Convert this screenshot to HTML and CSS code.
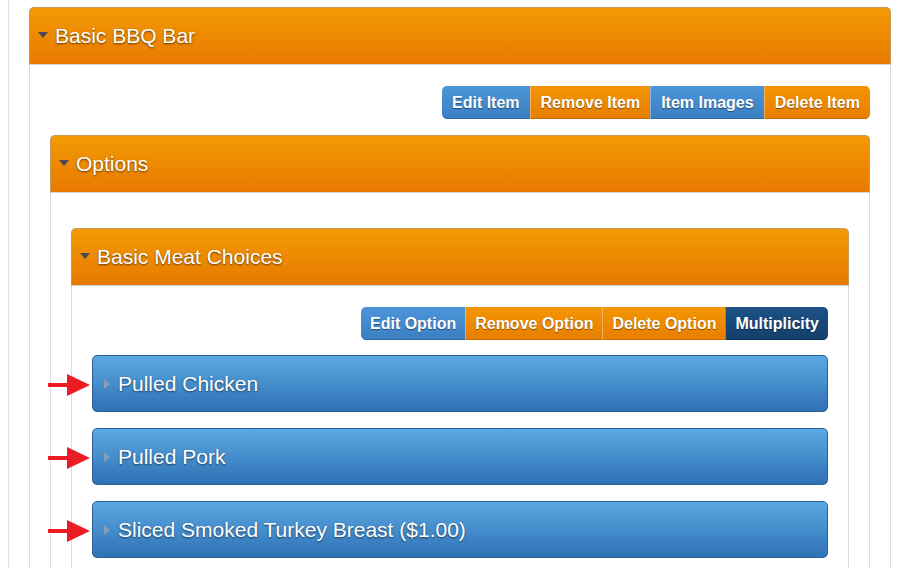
FILE: index.html
```html
<!DOCTYPE html>
<html lang="en">
<head>
  <meta charset="UTF-8">
  <meta name="viewport" content="width=device-width, initial-scale=1.0">
  <title>Basic BBQ Bar | Menu Editor</title>
  <link rel="stylesheet" href="styles.css">
</head>
<body>
  <div class="page">
    <div class="panel">
      <div class="panel-head"><span class="caret"></span>Basic BBQ Bar</div>
      <div class="panel-body">
        <div class="btn-row">
          <div class="btn-group">
            <a class="btn blue">Edit Item</a>
            <a class="btn orange">Remove Item</a>
            <a class="btn blue">Item Images</a>
            <a class="btn orange">Delete Item</a>
          </div>
        </div>

        <div class="panel">
          <div class="panel-head"><span class="caret"></span>Options</div>
          <div class="panel-body options-body">
            <div class="panel">
              <div class="panel-head"><span class="caret"></span>Basic Meat Choices</div>
              <div class="panel-body">
                <div class="btn-row">
                  <div class="btn-group compact">
                    <a class="btn blue">Edit Option</a>
                    <a class="btn orange">Remove Option</a>
                    <a class="btn orange">Delete Option</a>
                    <a class="btn navy">Multiplicity</a>
                  </div>
                </div>

                <div class="choices">
                  <div class="choice">
                    <svg class="pointer" width="44" height="24" viewBox="0 0 44 24"><rect x="0" y="10" width="21" height="4" fill="#ec1c24"/><polygon points="19,1 42,12 19,23" fill="#ec1c24"/></svg>
                    <span class="caret-right"></span>Pulled Chicken
                  </div>
                  <div class="choice">
                    <svg class="pointer" width="44" height="24" viewBox="0 0 44 24"><rect x="0" y="10" width="21" height="4" fill="#ec1c24"/><polygon points="19,1 42,12 19,23" fill="#ec1c24"/></svg>
                    <span class="caret-right"></span>Pulled Pork
                  </div>
                  <div class="choice">
                    <svg class="pointer" width="44" height="24" viewBox="0 0 44 24"><rect x="0" y="10" width="21" height="4" fill="#ec1c24"/><polygon points="19,1 42,12 19,23" fill="#ec1c24"/></svg>
                    <span class="caret-right"></span>Sliced Smoked Turkey Breast ($1.00)
                  </div>
                </div>
              </div>
            </div>
          </div>
        </div>
      </div>
    </div>
  </div>
</body>
</html>
```

FILE: styles.css
```css
body {
  margin: 0;
  background: #fff;
  font-family: "Liberation Sans", Arial, sans-serif;
}

.page {
  margin-left: 8px;
  border-left: 1px solid #e2e2e2;
  padding: 7px 9px 0 20px;
  min-height: 600px;
}

.panel {
  border: 1px solid #dcdcdc;
  border-top: 0;
  border-radius: 5px 5px 0 0;
  background: #fff;
}

.panel-head {
  height: 56px;
  margin: 0 -1px;
  border: 1px solid #c79a5a;
  border-bottom: 1px solid #d8d8d8;
  border-radius: 5px 5px 0 0;
  background: linear-gradient(#f39a05, #e87900);
  display: flex;
  align-items: center;
  padding-left: 8px;
  color: #fff;
  font-size: 21px;
  text-shadow: 0 1px 2px rgba(0, 0, 0, 0.6);
}

.caret {
  width: 0;
  height: 0;
  border-left: 5px solid transparent;
  border-right: 5px solid transparent;
  border-top: 6px solid #4a4a55;
  margin: 0 7px 3px 0;
}

.panel-body {
  padding: 21px 20px 20px;
}

.options-body {
  padding-top: 35px;
}

.btn-row {
  display: flex;
  justify-content: flex-end;
  margin-bottom: 16px;
}

.btn-group {
  display: flex;
  border-radius: 5px;
  overflow: hidden;
}

.btn {
  padding: 7px 10px;
  font-size: 16px;
  line-height: 19px;
  font-weight: bold;
  color: #fff;
  text-shadow: 0 1px 1px rgba(0, 0, 0, 0.45);
  border-left: 1px solid rgba(255, 255, 255, 0.35);
}
.btn:first-child {
  border-left: 0;
}
.compact .btn {
  padding: 7px 9px;
}

.blue {
  background: linear-gradient(#4d95d8, #3b7fc3);
  box-shadow: inset 0 -1px 0 #2f6aa3;
}
.orange {
  background: linear-gradient(#f39505, #e87e00);
  box-shadow: inset 0 -1px 0 #c96c00;
}
.navy {
  background: linear-gradient(#1c5287, #143f6b);
  box-shadow: inset 0 -1px 0 #0e3055;
}

.choices {
  display: flex;
  flex-direction: column;
  gap: 16px;
  margin-top: -1px;
}

.choice {
  position: relative;
  height: 55px;
  border: 1px solid #2b5f91;
  border-radius: 5px;
  background: linear-gradient(#5ca8e3, #2e72b4);
  display: flex;
  align-items: center;
  padding-left: 11px;
  color: #fff;
  font-size: 21px;
  text-shadow: 0 1px 2px rgba(0, 0, 0, 0.55);
}

.caret-right {
  width: 0;
  height: 0;
  border-top: 5px solid transparent;
  border-bottom: 5px solid transparent;
  border-left: 6px solid #8a9db2;
  margin-right: 8px;
}

.pointer {
  position: absolute;
  left: -45px;
  top: 17px;
}
```
